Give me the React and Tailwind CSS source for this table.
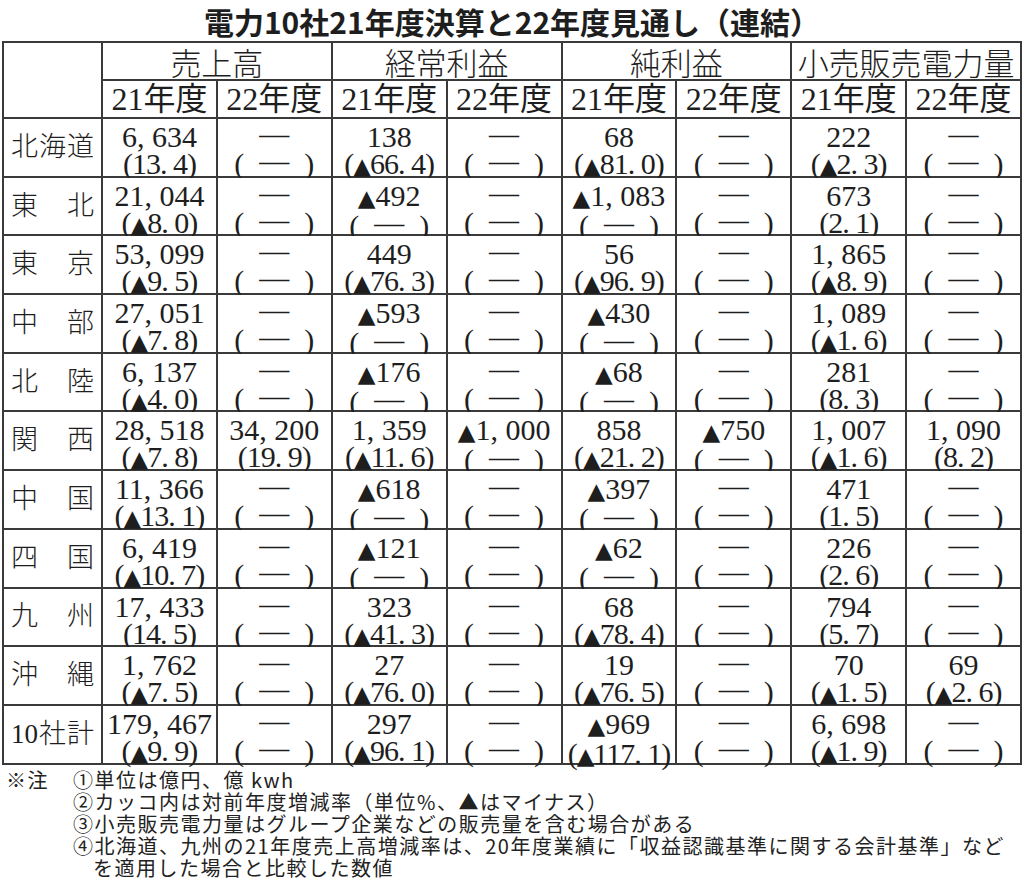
import React from "react";

const rows = [
  { label: ["北", "海", "道"], cells: [["6, 634", "13. 4"], ["—", "—"], ["138", "▲66. 4"], ["—", "—"], ["68", "▲81. 0"], ["—", "—"], ["222", "▲2. 3"], ["—", "—"]] },
  { label: ["東", "北"], cells: [["21, 044", "▲8. 0"], ["—", "—"], ["▲492", "—"], ["—", "—"], ["▲1, 083", "—"], ["—", "—"], ["673", "2. 1"], ["—", "—"]] },
  { label: ["東", "京"], cells: [["53, 099", "▲9. 5"], ["—", "—"], ["449", "▲76. 3"], ["—", "—"], ["56", "▲96. 9"], ["—", "—"], ["1, 865", "▲8. 9"], ["—", "—"]] },
  { label: ["中", "部"], cells: [["27, 051", "▲7. 8"], ["—", "—"], ["▲593", "—"], ["—", "—"], ["▲430", "—"], ["—", "—"], ["1, 089", "▲1. 6"], ["—", "—"]] },
  { label: ["北", "陸"], cells: [["6, 137", "▲4. 0"], ["—", "—"], ["▲176", "—"], ["—", "—"], ["▲68", "—"], ["—", "—"], ["281", "8. 3"], ["—", "—"]] },
  { label: ["関", "西"], cells: [["28, 518", "▲7. 8"], ["34, 200", "19. 9"], ["1, 359", "▲11. 6"], ["▲1, 000", "—"], ["858", "▲21. 2"], ["▲750", "—"], ["1, 007", "▲1. 6"], ["1, 090", "8. 2"]] },
  { label: ["中", "国"], cells: [["11, 366", "▲13. 1"], ["—", "—"], ["▲618", "—"], ["—", "—"], ["▲397", "—"], ["—", "—"], ["471", "1. 5"], ["—", "—"]] },
  { label: ["四", "国"], cells: [["6, 419", "▲10. 7"], ["—", "—"], ["▲121", "—"], ["—", "—"], ["▲62", "—"], ["—", "—"], ["226", "2. 6"], ["—", "—"]] },
  { label: ["九", "州"], cells: [["17, 433", "14. 5"], ["—", "—"], ["323", "▲41. 3"], ["—", "—"], ["68", "▲78. 4"], ["—", "—"], ["794", "5. 7"], ["—", "—"]] },
  { label: ["沖", "縄"], cells: [["1, 762", "▲7. 5"], ["—", "—"], ["27", "▲76. 0"], ["—", "—"], ["19", "▲76. 5"], ["—", "—"], ["70", "▲1. 5"], ["69", "▲2. 6"]] },
  { label: ["10", "社", "計"], cells: [["179, 467", "▲9. 9"], ["—", "—"], ["297", "▲96. 1"], ["—", "—"], ["▲969", "▲117. 1"], ["—", "—"], ["6, 698", "▲1. 9"], ["—", "—"]] },
];

const groups = ["売上高", "経常利益", "純利益", "小売販売電力量"];

function Tri() {
  return <span className="font-['DejaVu_Sans'] text-[23px]">▲</span>;
}

function Dash({ wide }) {
  return <span className={`relative -top-[3px] ${wide ? "mx-[15px]" : ""}`}>—</span>;
}

function Txt({ s }) {
  if (s === "—") return <Dash />;
  const parts = [];
  let buf = "";
  for (const ch of s) {
    if (ch === "▲") {
      if (buf) parts.push(buf);
      buf = "";
      parts.push(<Tri key={parts.length} />);
    } else buf += ch;
  }
  if (buf) parts.push(buf);
  return <>{parts}</>;
}

function Bottom({ s }) {
  if (s === "—")
    return (
      <span>
        (<Dash wide />)
      </span>
    );
  return (
    <span className="tracking-[-1px]">
      (<Txt s={s} />)
    </span>
  );
}

export default function App() {
  const serif = "font-['Liberation_Serif','Noto_Sans_CJK_JP',serif]";
  return (
    <div className="w-[1024px] h-[881px] bg-white text-[#1e1e1e] overflow-hidden">
      <div className="h-[41px] flex items-center justify-center font-['Noto_Sans_CJK_JP',sans-serif] font-bold text-[30px] leading-none">
        電力10社21年度決算と22年度見通し（連結）
      </div>
      <div
        className={`ml-[2px] w-[1020px] grid grid-cols-[97px_repeat(8,minmax(0,1fr))] grid-rows-[36px_36px_repeat(11,56.7px)] gap-[2px] p-[2px] bg-[#3a3a3a] ${serif}`}
      >
        <div className="bg-white row-span-2" />
        {groups.map((g) => (
          <div key={g} className="bg-white col-span-2 flex items-center justify-center text-[31px] leading-none font-['Noto_Sans_CJK_JP',sans-serif] font-light">
            {g}
          </div>
        ))}
        {groups.map((g) => (
          <React.Fragment key={g + "y"}>
            <div className="bg-white flex items-center justify-center text-[32px] leading-none">21年度</div>
            <div className="bg-white flex items-center justify-center text-[32px] leading-none">22年度</div>
          </React.Fragment>
        ))}
        {rows.map((r, i) => (
          <React.Fragment key={i}>
            <div className="bg-white flex items-center justify-between px-[7px] text-[27px] leading-none font-['Liberation_Serif','Noto_Sans_CJK_JP',sans-serif] font-light">
              {r.label.map((c, j) => (
                <span key={j}>{c}</span>
              ))}
            </div>
            {r.cells.map((c, j) => (
              <div key={j} className="bg-white flex flex-col items-center pt-[4px] text-[30px] leading-[27px] whitespace-nowrap">
                <div>
                  <Txt s={c[0]} />
                </div>
                <div>
                  <Bottom s={c[1]} />
                </div>
              </div>
            ))}
          </React.Fragment>
        ))}
      </div>
      <div className="mt-[4px] flex pl-[6px] font-['Noto_Sans_CJK_JP',sans-serif] text-[20px] leading-[22px] tracking-[1.5px] text-[#222] whitespace-nowrap">
        <div className="w-[67px] shrink-0">※注</div>
        <div className="flex flex-col">
          <div>①単位は億円、億 kwh</div>
          <div>②カッコ内は対前年度増減率（単位%、▲はマイナス）</div>
          <div>③小売販売電力量はグループ企業などの販売量を含む場合がある</div>
          <div>④北海道、九州の21年度売上高増減率は、20年度業績に「収益認識基準に関する会計基準」など</div>
          <div className="pl-[20px]">を適用した場合と比較した数値</div>
        </div>
      </div>
    </div>
  );
}
